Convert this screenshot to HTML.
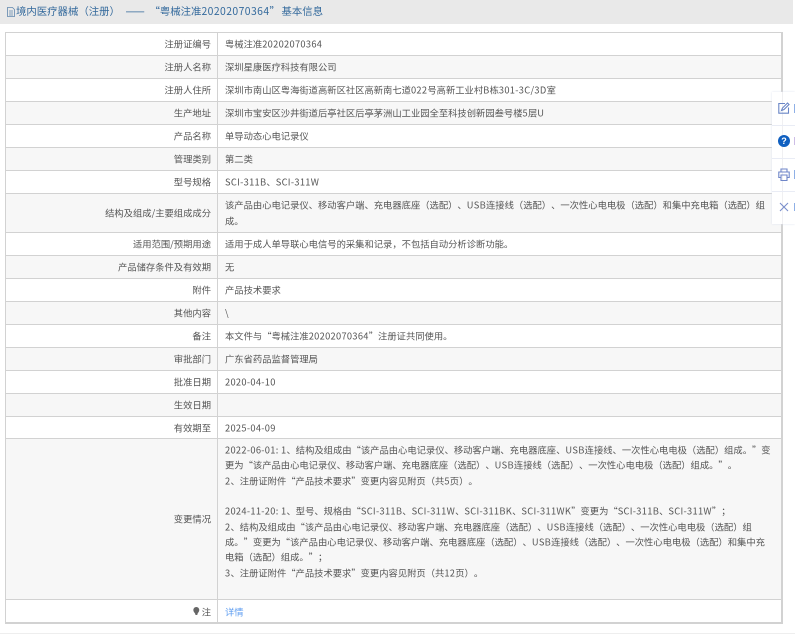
<!DOCTYPE html>
<html lang="zh-CN">
<head>
<meta charset="utf-8">
<style>
html,body{margin:0;padding:0;background:#fff}
body{position:relative;width:795px;height:634px;overflow:hidden;font-family:"Noto Sans CJK SC","Liberation Sans",sans-serif;font-size:9.3px;color:#555;font-kerning:none;text-spacing-trim:space-all;font-feature-settings:"palt" 0,"kern" 0}
.hd{position:absolute;left:0;top:0;width:793px;height:24px;background:#e9e9e9;color:#33699c;font-size:10.4px;line-height:22px;white-space:nowrap}
.hd span{position:absolute;top:0}
.hd i{font-style:normal;letter-spacing:.42px}
.r{position:absolute;left:6px;width:776px;border-top:1px solid #d2d2d2;box-sizing:border-box}
.o{background:#f7f7f7}
.t{position:absolute;white-space:nowrap;line-height:14px;transform:translateY(-.5px)}
.t i{font-style:normal;letter-spacing:.3px}
</style>
</head>
<body>
<div class="hd">
<svg style="position:absolute;left:6px;top:7px" width="10" height="10" viewBox="0 0 10 10" fill="none" stroke="#5f86ad" stroke-width=".8"><path d="M1.500.5h5l2 2v7h-7zM3 4h4M3 6h4M3 8h4"/></svg>
<span style="left:16px">境内医疗器械（注册）</span>
<span style="left:125.500px;font-size:11.500px">——</span>
<span style="left:149.500px">“粤械注准<i>20202070364</i>”</span>
<span style="left:281.500px">基本信息</span>
</div>

<div class="r" style="top:32px;height:23px"></div>
<div class="r o" style="top:55px;height:23px"></div>
<div class="r" style="top:78px;height:23px"></div>
<div class="r o" style="top:101px;height:23px"></div>
<div class="r" style="top:124px;height:23px"></div>
<div class="r o" style="top:147px;height:23px"></div>
<div class="r" style="top:170px;height:23px"></div>
<div class="r o" style="top:193px;height:39px"></div>
<div class="r" style="top:232px;height:23px"></div>
<div class="r o" style="top:255px;height:23px"></div>
<div class="r" style="top:278px;height:23px"></div>
<div class="r o" style="top:301px;height:23px"></div>
<div class="r" style="top:324px;height:23px"></div>
<div class="r o" style="top:347px;height:23px"></div>
<div class="r" style="top:370px;height:23px"></div>
<div class="r o" style="top:393px;height:23px"></div>
<div class="r" style="top:416px;height:22px"></div>
<div class="r o" style="top:438px;height:161px"></div>
<div class="r" style="top:599px;height:24px"></div>
<div style="position:absolute;left:217px;top:33px;width:1px;height:590px;background:#d2d2d2"></div>
<div style="position:absolute;left:5px;top:32px;width:778px;height:592px;border:1px solid #d2d2d2;border-bottom-width:2px;border-right-width:2px;box-sizing:border-box"></div>

<div class="t" style="right:584px;top:37px">注册证编号</div><div class="t" style="left:225px;top:37px">粤械注准<i>20202070364</i></div>
<div class="t" style="right:584px;top:60px">注册人名称</div><div class="t" style="left:225px;top:60px">深圳星康医疗科技有限公司</div>
<div class="t" style="right:584px;top:83px">注册人住所</div><div class="t" style="left:225px;top:83px">深圳市南山区粤海街道高新区社区高新南七道<i>022</i>号高新工业村<i>B</i>栋<i>301-3C/3D</i>室</div>
<div class="t" style="right:584px;top:106px">生产地址</div><div class="t" style="left:225px;top:106px">深圳市宝安区沙井街道后亭社区后亭茅洲山工业园全至科技创新园叁号楼<i>5</i>层<i>U</i></div>
<div class="t" style="right:584px;top:129px">产品名称</div><div class="t" style="left:225px;top:129px">单导动态心电记录仪</div>
<div class="t" style="right:584px;top:152px">管理类别</div><div class="t" style="left:225px;top:152px">第二类</div>
<div class="t" style="right:584px;top:175px">型号规格</div><div class="t" style="left:225px;top:175px"><i>SCI-311B</i>、<i>SCI-311W</i></div>
<div class="t" style="right:584px;top:206px">结构及组成/主要组成成分</div>
<div class="t" style="left:225px;top:198px">该产品由心电记录仪、移动客户端、充电器底座（选配）、<i>USB</i>连接线（选配）、一次性心电电极（选配）和集中充电箱（选配）组</div>
<div class="t" style="left:225px;top:214px">成。</div>
<div class="t" style="right:584px;top:237px">适用范围/预期用途</div><div class="t" style="left:225px;top:237px">适用于成人单导联心电信号的采集和记录，不包括自动分析诊断功能。</div>
<div class="t" style="right:584px;top:260px">产品储存条件及有效期</div><div class="t" style="left:225px;top:260px">无</div>
<div class="t" style="right:584px;top:283px">附件</div><div class="t" style="left:225px;top:283px">产品技术要求</div>
<div class="t" style="right:584px;top:306px">其他内容</div><div class="t" style="left:225px;top:306px">\</div>
<div class="t" style="right:584px;top:329px">备注</div><div class="t" style="left:225px;top:329px">本文件与“粤械注准<i>20202070364</i>”注册证共同使用。</div>
<div class="t" style="right:584px;top:352px">审批部门</div><div class="t" style="left:225px;top:352px">广东省药品监督管理局</div>
<div class="t" style="right:584px;top:375px">批准日期</div><div class="t" style="left:225px;top:375px"><i>2020-04-10</i></div>
<div class="t" style="right:584px;top:398px">生效日期</div>
<div class="t" style="right:584px;top:421px">有效期至</div><div class="t" style="left:225px;top:421px"><i>2025-04-09</i></div>
<div class="t" style="right:584px;top:512px">变更情况</div>
<div class="t" style="left:225px;top:443px"><i>2022-06-01: 1</i>、结构及组成由“该产品由心电记录仪、移动客户端、充电器底座、<i>USB</i>连接线、一次性心电电极（选配）组成。”变</div>
<div class="t" style="left:225px;top:458px">更为“该产品由心电记录仪、移动客户端、充电器底座（选配）、<i>USB</i>连接线（选配）、一次性心电电极（选配）组成。”。</div>
<div class="t" style="left:225px;top:474px"><i>2</i>、注册证附件“产品技术要求”变更内容见附页（共<i>5</i>页）。</div>
<div class="t" style="left:225px;top:504px"><i>2024-11-20: 1</i>、型号、规格由“<i>SCI-311B</i>、<i>SCI-311W</i>、<i>SCI-311BK</i>、<i>SCI-311WK</i>”变更为“<i>SCI-311B</i>、<i>SCI-311W</i>”；</div>
<div class="t" style="left:225px;top:520px"><i>2</i>、结构及组成由“该产品由心电记录仪、移动客户端、充电器底座（选配）、<i>USB</i>连接线（选配）、一次性心电电极（选配）组</div>
<div class="t" style="left:225px;top:535px">成。”变更为“该产品由心电记录仪、移动客户端、充电器底座（选配）、<i>USB</i>连接线（选配）、一次性心电电极（选配）和集中充</div>
<div class="t" style="left:225px;top:550px">电箱（选配）组成。”；</div>
<div class="t" style="left:225px;top:566px"><i>3</i>、注册证附件“产品技术要求”变更内容见附页（共<i>12</i>页）。</div>
<div class="t" style="right:584px;top:605px">注</div>
<svg style="position:absolute;left:193px;top:607px" width="7" height="10" viewBox="0 0 7 10"><path d="M3.300 0a3 3 0 0 1 2.700 4.200C5.500 5.500 4.500 6 4.300 8H2.500C2.300 6 1 5.500.6 4.200A3 3 0 0 1 3.300 0z" fill="#666"/></svg>
<div class="t" style="left:225px;top:605px;color:#5b9bf0">详情</div>

<div style="position:absolute;left:772px;top:92px;width:23px;height:132px;background:#fff;box-shadow:0 0 2px #dde2ef">
<div style="position:absolute;left:9.500px;top:0;width:1px;height:132px;background:#f0f0f2"></div>
<div style="position:absolute;left:0;top:33px;width:23px;height:1px;background:#e9ecf5"></div>
<div style="position:absolute;left:0;top:66px;width:23px;height:1px;background:#e9ecf5"></div>
<div style="position:absolute;left:0;top:99px;width:23px;height:1px;background:#e9ecf5"></div>
<svg style="position:absolute;left:6px;top:10px" width="12" height="12" viewBox="0 0 12 12" fill="none" stroke="#6a86c6" stroke-width="1.100"><path d="M7 1.500H.8v9.700h9.700V5.500M3.500 8.500l1-2.500L9.500 1l1.500 1.500-5 5z"/></svg>
<div style="position:absolute;left:6px;top:43px;width:12px;height:12px;border-radius:50%;background:#0f5fc0;color:#fff;font:bold 9px/12px 'Liberation Sans',sans-serif;text-align:center">?</div>
<svg style="position:absolute;left:6px;top:76px" width="12" height="13" viewBox="0 0 12 13" fill="none" stroke="#6f86c8" stroke-width="1.100"><path d="M3 4V1h6v3M3 9.500H.8V4h10.400v5.500H9M3 7h6v5.500H3z"/></svg>
<svg style="position:absolute;left:7px;top:110px" width="10" height="10" viewBox="0 0 10 10" fill="none" stroke="#7a8ecb" stroke-width="1.100"><path d="M1 1l8 8M9 1L1 9"/></svg>
<div style="position:absolute;left:21.500px;top:12px;width:1.500px;height:9px;background:#8fb0e6"></div>
<div style="position:absolute;left:21.500px;top:45px;width:1.500px;height:8px;background:#cdbde6"></div>
<div style="position:absolute;left:21.500px;top:78px;width:1.500px;height:9px;background:#8fb0e6"></div>
<div style="position:absolute;left:21.500px;top:111px;width:1.500px;height:8px;background:#8fb0e6"></div>
</div>
<div style="position:absolute;left:0;top:633px;width:795px;height:1px;background:#eee"></div>
</body>
</html>
